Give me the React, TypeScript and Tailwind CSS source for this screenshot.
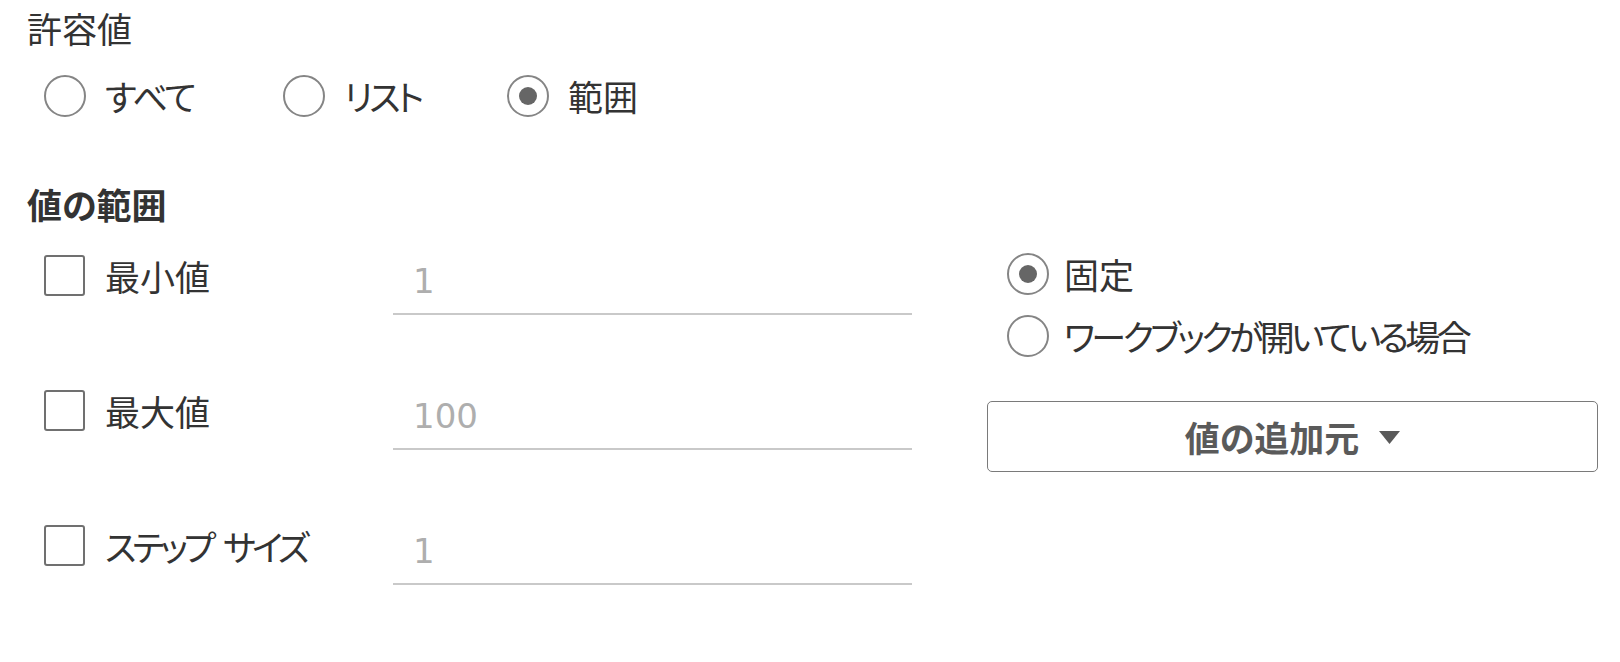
import React from "react";

const jp = "font-['Noto_Sans_CJK_JP','Noto_Sans',sans-serif] [font-feature-settings:'palt']";

function Radio({ checked }: { checked?: boolean }) {
  return (
    <span className="flex h-[42px] w-[42px] shrink-0 items-center justify-center rounded-full border-2 border-[#858585] bg-white">
      {checked && <span className="h-[18px] w-[18px] rounded-full bg-[#666666]" />}
    </span>
  );
}

function Checkbox() {
  return <span className="block h-[41px] w-[41px] shrink-0 rounded-[3px] border-2 border-[#707070] bg-white" />;
}

function RangeRow({ label, value }: { label: React.ReactNode; value: string }) {
  return (
    <div className="flex h-[135px]">
      <div className="flex w-[366px] items-start pl-[17px] pt-[31px]">
        <div className="flex h-[41px] items-center gap-[20px]">
          <Checkbox />
          <span className={`${jp} flex text-[35px] leading-[41px] text-[#333333]`}>{label}</span>
        </div>
      </div>
      <div className="w-[519px] pt-[31px]">
        <div className="h-[60px] border-b-2 border-[#c9c9c9] pl-[20px]">
          <span className="font-['DejaVu_Sans',sans-serif] text-[34px] leading-[52px] text-[#aeaeae]">{value}</span>
        </div>
      </div>
    </div>
  );
}

export default function App() {
  return (
    <div className={`${jp} h-[662px] w-[1620px] overflow-hidden bg-white px-[27px] text-[#333333]`}>
      <div className="h-[55px] text-[35px] leading-[55px]">許容値</div>

      <div className="mt-[19px] flex h-[43px] items-center pl-[17px]">
        <div className="flex w-[239px] items-center gap-[19px]">
          <Radio />
          <span className="text-[35px] leading-[43px] tracking-[-2px]">すべて</span>
        </div>
        <div className="flex w-[224px] items-center gap-[19px]">
          <Radio />
          <span className="text-[35px] leading-[43px] tracking-[-3.5px]">リスト</span>
        </div>
        <div className="flex items-center gap-[19px]">
          <Radio checked />
          <span className="text-[35px] leading-[43px]">範囲</span>
        </div>
      </div>

      <div className="mt-[67px] h-[40px] text-[35px] font-bold leading-[40px]">値の範囲</div>

      <div className="flex">
        <div className="w-[885px]">
          <RangeRow label="最小値" value="1" />
          <RangeRow label="最大値" value="100" />
          <RangeRow
            label={
              <>
                <span className="tracking-[-4px]">ステップ</span>
                <span className="ml-[11px] tracking-[-4px]">サイズ</span>
              </>
            }
            value="1"
          />
        </div>
        <div className="ml-[75px] w-[611px] pt-[29px]">
          <div className="flex flex-col gap-[20px] pl-[20px]">
            <div className="flex h-[42px] items-center gap-[15px]">
              <Radio checked />
              <span className="text-[35px] leading-[42px]">固定</span>
            </div>
            <div className="flex h-[42px] items-center gap-[15px]">
              <Radio />
              <span className="text-[35px] leading-[42px] tracking-[-3.6px]">ワークブックが開いている場合</span>
            </div>
          </div>
          <button className="mt-[44px] flex h-[71px] w-[611px] items-center justify-center gap-[20px] rounded-[5px] border-[1.5px] border-[#7a7a7a] bg-white">
            <span className={`${jp} text-[35px] font-bold leading-[40px] text-[#5a5a5a]`}>値の追加元</span>
            <svg width="21" height="14" viewBox="0 0 21 14" className="mt-[2px]">
              <polygon points="0,0 21,0 10.5,13" fill="#5a5a5a" />
            </svg>
          </button>
        </div>
      </div>
    </div>
  );
}
